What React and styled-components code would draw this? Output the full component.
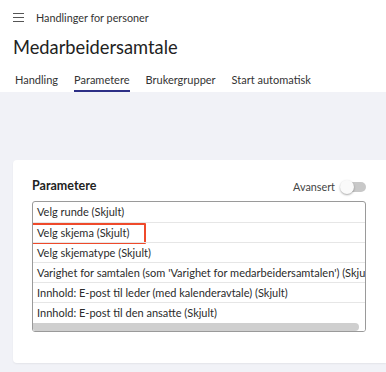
import React from "react";
import styled, { createGlobalStyle } from "styled-components";

const Global = createGlobalStyle`
  html, body { margin: 0; padding: 0; background: #fff; }
  body { font-family: Lato, "Noto Sans", sans-serif; color: #2b2b2b; }
  * { box-sizing: border-box; }
`;

const Page = styled.div`
  width: 386px;
  height: 372px;
  overflow: hidden;
  display: flex;
  flex-direction: column;
`;

const Header = styled.header`
  background: #fff;
  padding: 0 0 0 13px;
`;

const TopBar = styled.div`
  display: flex;
  align-items: center;
  gap: 12px;
  height: 35px;
  font-size: 10.8px;
  color: #333;
`;

const Burger = styled.span`
  display: flex;
  flex-direction: column;
  gap: 3px;
  width: 11px;
  & > i { display: block; height: 1.3px; background: #555; }
`;

const Title = styled.h1`
  margin: 0;
  font-size: 18.3px;
  font-weight: 400;
  color: #222;
  line-height: 24px;
  height: 34px;
  padding-top: 0;
`;

const Tabs = styled.nav`
  display: flex;
  gap: 16px;
  padding-left: 2px;
  height: 23px;
`;

const Tab = styled.div`
  font-size: 11px;
  color: #333;
  line-height: 20px;
  border-bottom: 2px solid ${(p) => (p.$active ? "#2d2f86" : "transparent")};
  height: 23px;
  padding-top: 1px;
`;

const Body = styled.main`
  flex: 1;
  background: #f1f2f7;
  padding: 68px 0 0 13px;
`;

const Card = styled.section`
  background: #fff;
  border-radius: 4px 0 0 4px;
  box-shadow: 0 1px 2px rgba(0, 0, 0, 0.06);
  height: 203px;
  padding: 18px 20px 0 19px;
`;

const CardHead = styled.div`
  display: flex;
  align-items: flex-start;
  justify-content: space-between;
  height: 23px;
`;

const CardTitle = styled.h2`
  margin: 0;
  font-size: 12.5px;
  line-height: 15px;
  font-weight: 700;
  color: #222;
`;

const Adv = styled.label`
  display: flex;
  align-items: center;
  gap: 5px;
  font-size: 10.8px;
  line-height: 14px;
  color: #444;
  margin-top: 2px;
`;

const Switch = styled.span`
  position: relative;
  width: 26px;
  height: 14px;
  display: inline-block;
  &::before {
    content: "";
    position: absolute;
    left: 2px;
    right: 0;
    top: 2px;
    height: 10px;
    border-radius: 5px;
    background: #c8c8c8;
  }
  &::after {
    content: "";
    position: absolute;
    left: 0;
    top: 0;
    width: 14px;
    height: 14px;
    border-radius: 50%;
    background: #fafafa;
    box-shadow: 0 1px 2px rgba(0, 0, 0, 0.35);
  }
`;

const ListBox = styled.div`
  width: 334px;
  border: 1px solid #9a9a9a;
  border-radius: 3px;
  overflow: hidden;
  display: flex;
  flex-direction: column;
`;

const Rows = styled.div`
  display: flex;
  flex-direction: column;
`;

const Row = styled.div`
  position: relative;
  height: 20px;
  line-height: 19px;
  padding-left: 4px;
  font-size: 11px;
  color: #2b2b2b;
  white-space: nowrap;
  border-top: ${(p) => (p.$first ? "none" : "1px solid #e6e6e6")};
`;

const Highlight = styled.span`
  position: absolute;
  left: -4px;
  top: 0px;
  width: 117px;
  height: 21px;
  border: 2px solid #ef4a2b;
  border-radius: 1px;
`;

const Scroll = styled.div`
  height: 9px;
  padding: 1px 6px 0 0;
  background: #fff;
  & > div {
    height: 8px;
    background: #cfcfcf;
    border-radius: 0 4px 4px 0;
  }
`;

const items = [
  "Velg runde (Skjult)",
  "Velg skjema (Skjult)",
  "Velg skjematype (Skjult)",
  "Varighet for samtalen (som 'Varighet for medarbeidersamtalen') (Skjult)",
  "Innhold: E-post til leder (med kalenderavtale) (Skjult)",
  "Innhold: E-post til den ansatte (Skjult)",
];

export default function App() {
  return (
    <Page>
      <Global />
      <Header>
        <TopBar>
          <Burger><i /><i /><i /></Burger>
          <span>Handlinger for personer</span>
        </TopBar>
        <Title>Medarbeidersamtale</Title>
        <Tabs>
          <Tab>Handling</Tab>
          <Tab $active>Parametere</Tab>
          <Tab>Brukergrupper</Tab>
          <Tab>Start automatisk</Tab>
        </Tabs>
      </Header>
      <Body>
        <Card>
          <CardHead>
            <CardTitle>Parametere</CardTitle>
            <Adv>
              Avansert
              <Switch />
            </Adv>
          </CardHead>
          <ListBox>
            <Rows>
              {items.map((t, i) => (
                <Row key={t} $first={i === 0}>
                  {i === 1 && <Highlight />}
                  {t}
                </Row>
              ))}
            </Rows>
            <Scroll><div /></Scroll>
          </ListBox>
        </Card>
      </Body>
    </Page>
  );
}
